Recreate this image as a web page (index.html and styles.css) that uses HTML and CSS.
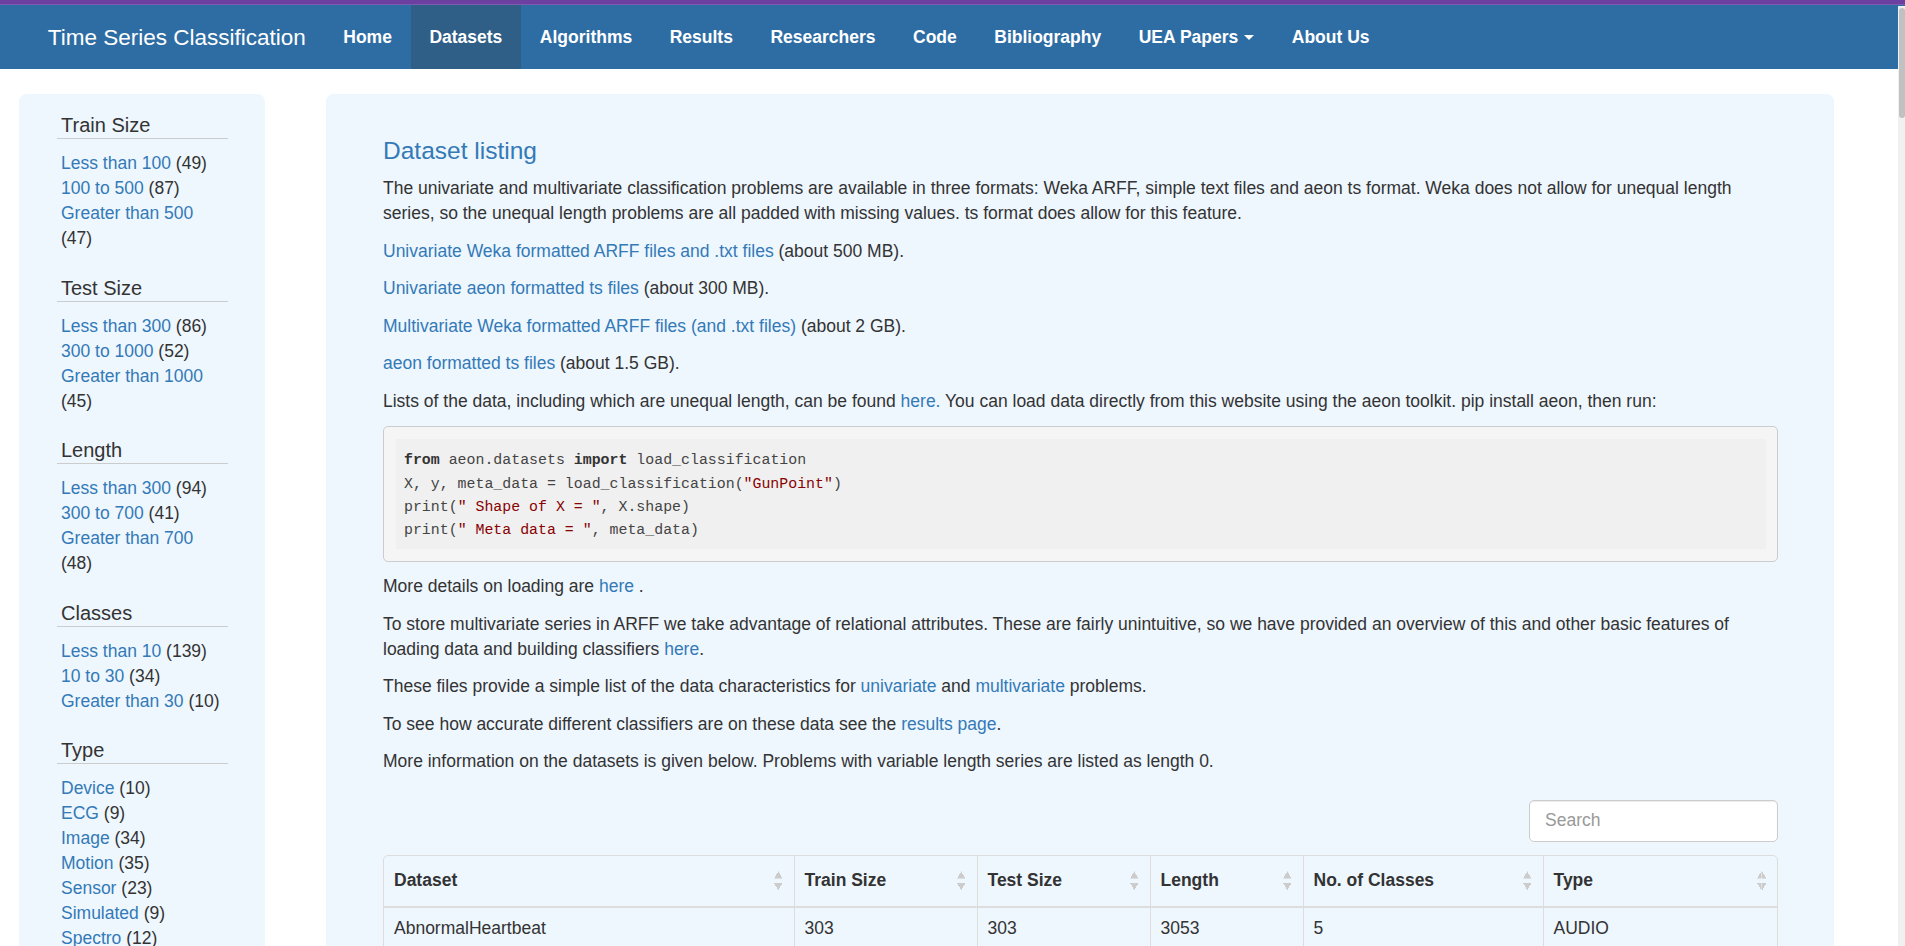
FILE: index.html
```html
<!DOCTYPE html>
<html lang="en">
<head>
<meta charset="utf-8">
<title>Time Series Classification - Datasets</title>
<link rel="stylesheet" href="styles.css">
</head>
<body>
<div class="topline"></div>
<nav class="navbar">
  <a class="brand" href="#">Time Series Classification</a>
  <ul class="nav">
    <li><a href="#">Home</a></li>
    <li class="active"><a href="#">Datasets</a></li>
    <li><a href="#">Algorithms</a></li>
    <li><a href="#">Results</a></li>
    <li><a href="#">Researchers</a></li>
    <li><a href="#">Code</a></li>
    <li><a href="#">Bibliography</a></li>
    <li><a href="#">UEA Papers <span class="caret"></span></a></li>
    <li><a href="#">About Us</a></li>
  </ul>
</nav>

<div class="layout">
  <aside class="sidebar">
    <div class="filters">
      <div class="group">
        <h4 class="group-title">Train Size</h4>
        <ul class="group-list">
          <li><a href="#">Less than 100</a> (49)</li>
          <li><a href="#">100 to 500</a> (87)</li>
          <li><a href="#">Greater than 500</a> (47)</li>
        </ul>
      </div>
      <div class="group">
        <h4 class="group-title">Test Size</h4>
        <ul class="group-list">
          <li><a href="#">Less than 300</a> (86)</li>
          <li><a href="#">300 to 1000</a> (52)</li>
          <li><a href="#">Greater than 1000</a> (45)</li>
        </ul>
      </div>
      <div class="group">
        <h4 class="group-title">Length</h4>
        <ul class="group-list">
          <li><a href="#">Less than 300</a> (94)</li>
          <li><a href="#">300 to 700</a> (41)</li>
          <li><a href="#">Greater than 700</a> (48)</li>
        </ul>
      </div>
      <div class="group">
        <h4 class="group-title">Classes</h4>
        <ul class="group-list">
          <li><a href="#">Less than 10</a> (139)</li>
          <li><a href="#">10 to 30</a> (34)</li>
          <li><a href="#">Greater than 30</a> (10)</li>
        </ul>
      </div>
      <div class="group">
        <h4 class="group-title">Type</h4>
        <ul class="group-list">
          <li><a href="#">Device</a> (10)</li>
          <li><a href="#">ECG</a> (9)</li>
          <li><a href="#">Image</a> (34)</li>
          <li><a href="#">Motion</a> (35)</li>
          <li><a href="#">Sensor</a> (23)</li>
          <li><a href="#">Simulated</a> (9)</li>
          <li><a href="#">Spectro</a> (12)</li>
          <li><a href="#">Traffic</a> (2)</li>
          <li><a href="#">Audio</a> (8)</li>
          <li><a href="#">EEG</a> (6)</li>
          <li><a href="#">HAR</a> (12)</li>
        </ul>
      </div>
    </div>
  </aside>

  <main class="content">
    <h3 class="title">Dataset listing</h3>
    <p>The univariate and multivariate classification problems are available in three formats: Weka ARFF, simple text files and aeon ts format. Weka does not allow for unequal length series, so the unequal length problems are all padded with missing values. ts format does allow for this feature.</p>
    <p><a href="#">Univariate Weka formatted ARFF files and .txt files</a> (about 500 MB).</p>
    <p><a href="#">Univariate aeon formatted ts files</a> (about 300 MB).</p>
    <p><a href="#">Multivariate Weka formatted ARFF files (and .txt files)</a> (about 2 GB).</p>
    <p><a href="#">aeon formatted ts files</a> (about 1.5 GB).</p>
    <p>Lists of the data, including which are unequal length, can be found <a href="#">here.</a> You can load data directly from this website using the aeon toolkit. pip install aeon, then run:</p>
    <pre class="codebox"><code class="code"><span class="kw">from</span> aeon.datasets <span class="kw">import</span> load_classification
X, y, meta_data = load_classification(<span class="str">"GunPoint"</span>)
print(<span class="str">" Shape of X = "</span>, X.shape)
print(<span class="str">" Meta data = "</span>, meta_data)</code></pre>
    <p>More details on loading are <a href="#">here</a> .</p>
    <p>To store multivariate series in ARFF we take advantage of relational attributes. These are fairly unintuitive, so we have provided an overview of this and other basic features of loading data and building classifiers <a href="#">here</a>.</p>
    <p>These files provide a simple list of the data characteristics for <a href="#">univariate</a> and <a href="#">multivariate</a> problems.</p>
    <p>To see how accurate different classifiers are on these data see the <a href="#">results page</a>.</p>
    <p>More information on the datasets is given below. Problems with variable length series are listed as length 0.</p>

    <div class="toolbar">
      <input class="search" type="text" placeholder="Search">
    </div>

    <div class="table-wrap">
      <table class="data">
        <colgroup>
          <col class="c1"><col class="c2"><col class="c3"><col class="c4"><col class="c5"><col class="c6">
        </colgroup>
        <thead>
          <tr>
            <th><div class="th-inner"><span>Dataset</span><span class="sort"></span></div></th>
            <th><div class="th-inner"><span>Train Size</span><span class="sort"></span></div></th>
            <th><div class="th-inner"><span>Test Size</span><span class="sort"></span></div></th>
            <th><div class="th-inner"><span>Length</span><span class="sort"></span></div></th>
            <th><div class="th-inner"><span>No. of Classes</span><span class="sort"></span></div></th>
            <th><div class="th-inner"><span>Type</span><span class="sort"></span></div></th>
          </tr>
        </thead>
        <tbody>
          <tr><td>AbnormalHeartbeat</td><td>303</td><td>303</td><td>3053</td><td>5</td><td>AUDIO</td></tr>
          <tr><td>ACSF1</td><td>100</td><td>100</td><td>1460</td><td>10</td><td>DEVICE</td></tr>
          <tr><td>Adiac</td><td>390</td><td>391</td><td>176</td><td>37</td><td>IMAGE</td></tr>
          <tr><td>AllGestureWiimoteX</td><td>300</td><td>700</td><td>0</td><td>10</td><td>SENSOR</td></tr>
          <tr><td>AllGestureWiimoteY</td><td>300</td><td>700</td><td>0</td><td>10</td><td>SENSOR</td></tr>
          <tr><td>AllGestureWiimoteZ</td><td>300</td><td>700</td><td>0</td><td>10</td><td>SENSOR</td></tr>
        </tbody>
      </table>
    </div>
  </main>
</div>

<div class="scrollbar"><div class="scroll-thumb"></div></div>
</body>
</html>
```
FILE: styles.css
```css
* { box-sizing: border-box; }

html, body {
  margin: 0;
  padding: 0;
}

body {
  font-family: "Liberation Sans", Arial, sans-serif;
  font-size: 17.5px;
  line-height: 25px;
  color: #333;
  background: #fff;
}

a {
  color: #337ab7;
  text-decoration: none;
}

.topline {
  height: 5px;
  background: #6b40a0;
  border-bottom: 1px solid #7d5cb0;
}

/* Navbar */
.navbar {
  display: flex;
  align-items: stretch;
  height: 64px;
  background: #2e6da4;
  padding-left: 29px;
}

.brand {
  display: flex;
  align-items: center;
  padding: 1px 18.75px 0;
  font-size: 22.5px;
  line-height: 25px;
  color: #fff;
}

.nav {
  display: flex;
  list-style: none;
  margin: 0;
  padding: 0;
}

.nav li a {
  display: flex;
  align-items: center;
  height: 100%;
  padding: 0 18.75px;
  color: #fff;
  font-weight: bold;
  font-size: 17.5px;
}

.nav li.active a {
  background: #2f5e86;
}

.caret {
  display: inline-block;
  width: 0;
  height: 0;
  margin-left: 6px;
  border-top: 5px solid #fff;
  border-left: 5px solid transparent;
  border-right: 5px solid transparent;
}

/* Layout */
.layout {
  display: flex;
  align-items: flex-start;
  gap: 61px;
  padding: 25px 0 0 19px;
}

/* Sidebar */
.sidebar {
  flex: 0 0 246px;
  width: 246px;
  background: #eef6fe;
  border-radius: 8px;
  padding: 19px 0 24px 38px;
}

.filters {
  width: 171px;
}

.group + .group {
  margin-top: 24.5px;
}

.group-title {
  margin: 0;
  padding-left: 4px;
  font-size: 20px;
  font-weight: normal;
  line-height: 25px;
  color: #333;
  border-bottom: 1px solid #ccc;
}

.group-list {
  list-style: none;
  margin: 12px 0 0;
  padding: 0 0 0 4px;
}

/* Main content */
.content {
  flex: 0 0 1508px;
  width: 1508px;
  background: #eef6fe;
  border-radius: 8px;
  padding: 44px 56px 40px 57px;
}

.title {
  margin: 0 0 11.5px;
  font-size: 24.5px;
  font-weight: normal;
  line-height: 1.1;
  color: #337ab7;
}

.content p {
  margin: 0 0 12.5px;
}

.codebox {
  margin: 0 0 12.5px;
  padding: 11.5px;
  background: #f5f5f5;
  border: 1px solid #ccc;
  border-radius: 5px;
}

.code {
  display: block;
  padding: 10.5px 8.5px 7px;
  background: #f0f0f0;
  font-family: "Liberation Mono", "DejaVu Sans Mono", monospace;
  font-size: 14.9px;
  line-height: 23.2px;
  color: #444;
  white-space: pre;
}

.kw {
  font-weight: bold;
  color: #333;
}

.str {
  color: #880000;
}

.toolbar {
  display: flex;
  justify-content: flex-end;
  padding-top: 12.8px;
  margin-bottom: 12.5px;
}

.search {
  width: 249px;
  height: 42.5px;
  padding: 7.5px 15px;
  font-family: "Liberation Sans", Arial, sans-serif;
  font-size: 17.5px;
  color: #555;
  background: #fff;
  border: 1px solid #ccc;
  border-radius: 5px;
  box-shadow: inset 0 1px 1px rgba(0,0,0,0.075);
  outline: none;
}

.search::placeholder {
  color: #999;
}

.table-wrap {
  border: 1px solid #ddd;
  border-radius: 5px;
  overflow: hidden;
}

.data {
  width: 100%;
  border-collapse: collapse;
  table-layout: fixed;
}

.c1 { width: 410px; }
.c2 { width: 183px; }
.c3 { width: 173px; }
.c4 { width: 153px; }
.c5 { width: 240px; }
.c6 { width: auto; }

.data th,
.data td {
  text-align: left;
  border-left: 1px solid #ddd;
}

.data th:first-child,
.data td:first-child {
  border-left: 0;
}

.data th {
  padding: 12.5px 0 12.5px 10px;
  font-weight: bold;
  border-bottom: 2px solid #ddd;
}

.th-inner {
  display: flex;
  align-items: center;
  justify-content: space-between;
  padding-right: 11px;
}

.sort {
  width: 9px;
  height: 19px;
  background:
    linear-gradient(to bottom right, transparent 50%, #cccccc 50%) left top / 4.5px 7.5px no-repeat,
    linear-gradient(to bottom left, transparent 50%, #cccccc 50%) right top / 4.5px 7.5px no-repeat,
    linear-gradient(to top right, transparent 50%, #cccccc 50%) left bottom / 4.5px 7.5px no-repeat,
    linear-gradient(to top left, transparent 50%, #cccccc 50%) right bottom / 4.5px 7.5px no-repeat;
}

.data td {
  padding: 8px 10px 9px;
  border-top: 1px solid #ddd;
}

.data tbody tr:first-child td {
  border-top: 0;
}

/* Browser scrollbar overlay */
.scrollbar {
  position: fixed;
  top: 6px;
  right: 0;
  bottom: 0;
  width: 7px;
  background: #f1f1f1;
}

.scroll-thumb {
  margin: 2px 0 0 1px;
  width: 6px;
  height: 110px;
  border-radius: 3px;
  background: #c1c1c1;
}
```
